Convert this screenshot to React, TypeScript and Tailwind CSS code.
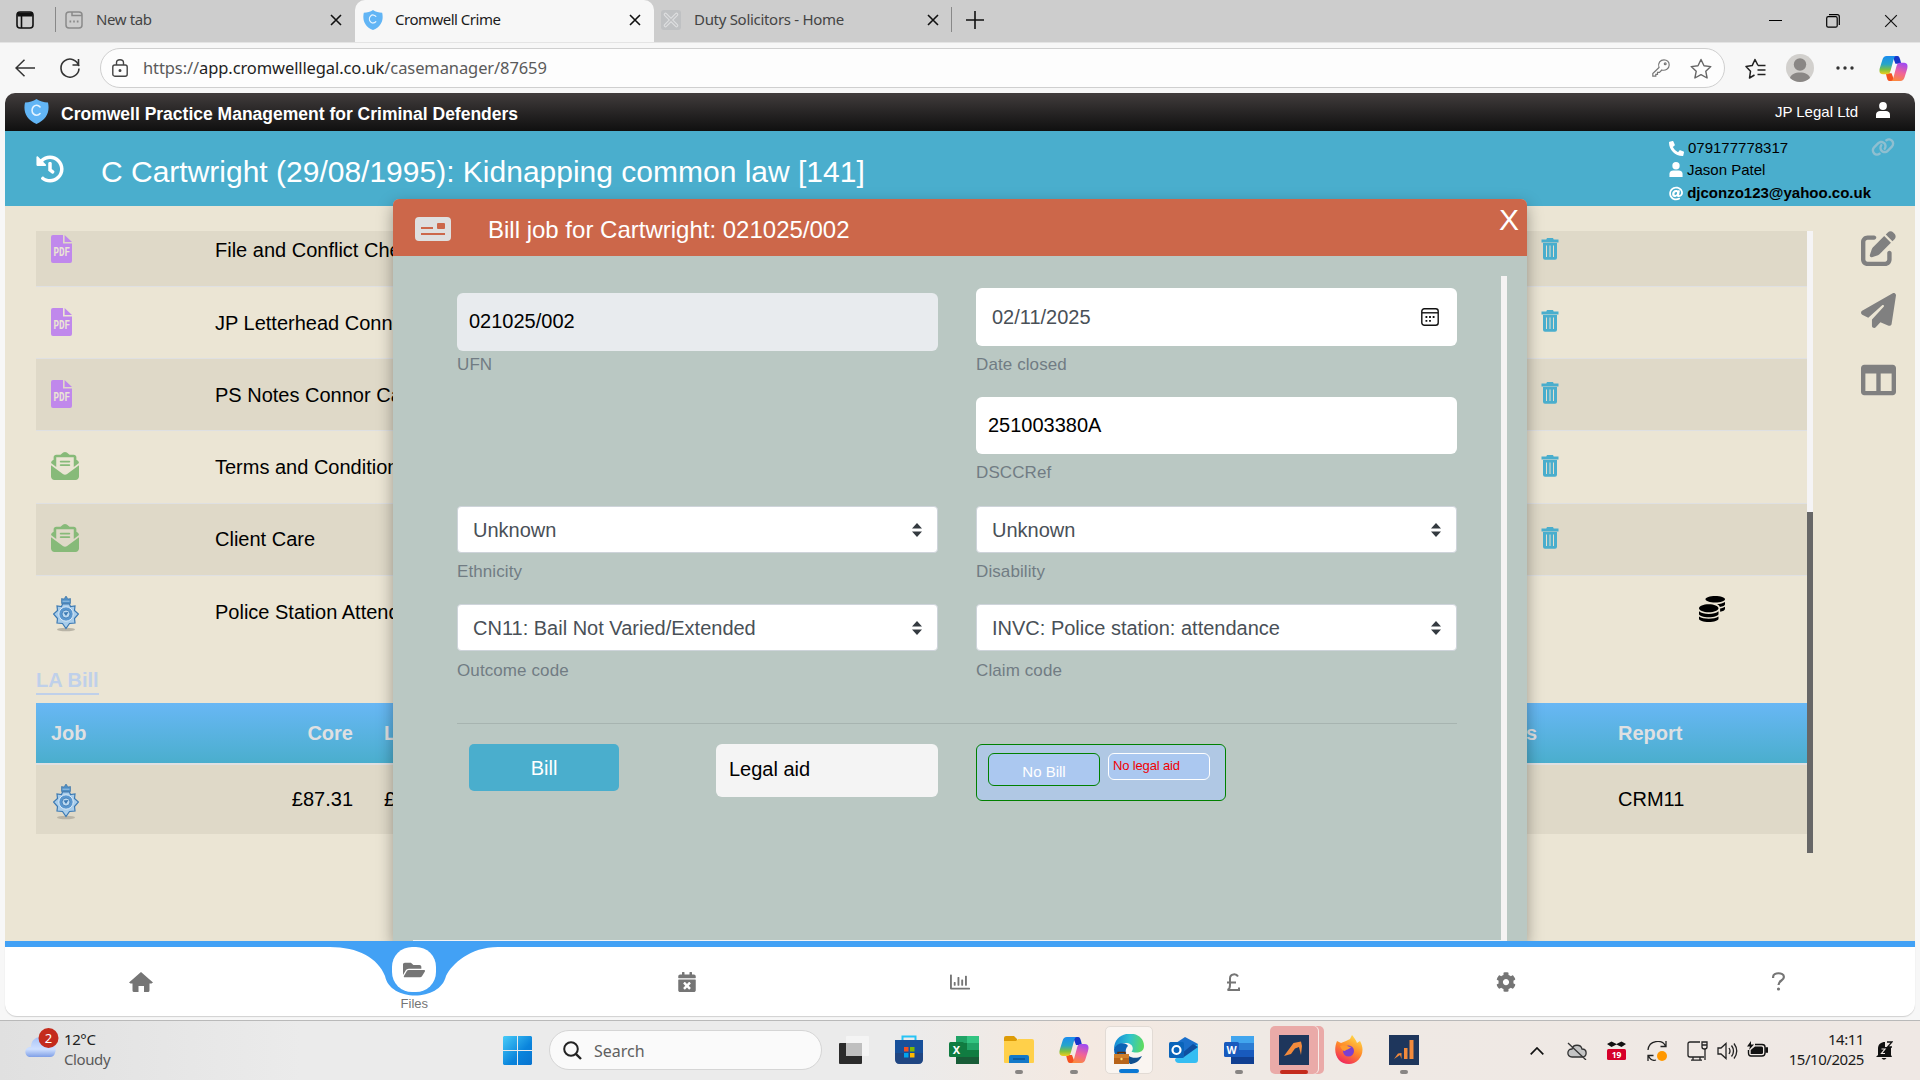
import React from "react";
import {
  FaHistory, FaCoins, FaColumns, FaFolderOpen, FaCalendarTimes,
  FaRegChartBar, FaCog, FaPhoneAlt, FaAt,
} from "react-icons/fa";
import { FaPenToSquare, FaPaperPlane, FaEnvelopeOpenText, FaLink } from "react-icons/fa6";

const ui = "font-['Noto_Sans','Open_Sans',sans-serif]";

function Shield({ className }: { className: string }) {
  return (
    <svg viewBox="0 0 24 24" preserveAspectRatio="none" className={className}>
      <path d="M12 0C9 2.2 5 3.2 1 3.4C-1 12 2 20 12 24C22 20 25 12 23 3.4C19 3.2 15 2.2 12 0Z" fill="#62b5f5" />
      <path d="M15.4 7.6A4.4 4.8 0 1 0 15.4 14" fill="none" stroke="#e6f4ff" strokeWidth="1.5" strokeLinecap="round" />
    </svg>
  );
}

function Person({ className }: { className: string }) {
  return (
    <svg viewBox="0 0 14 16" className={className} fill="white">
      <ellipse cx="7" cy="4" rx="3.9" ry="4" />
      <path d="M0 16V12.5C0 10.3 2 9 4 9H10C12 9 14 10.3 14 12.5V16Z" />
    </svg>
  );
}

function Copilot({ className, id }: { className: string; id: string }) {
  return (
    <svg viewBox="0 0 30 28" className={className}>
      <defs>
        <linearGradient id={id + "a"} x1="0" y1="0" x2="0" y2="1">
          <stop offset="0" stopColor="#1a8cf0" />
          <stop offset=".45" stopColor="#27a5c9" />
          <stop offset=".75" stopColor="#7fc03f" />
          <stop offset="1" stopColor="#f2ce1d" />
        </linearGradient>
        <linearGradient id={id + "b"} x1=".6" y1="0" x2=".3" y2="1">
          <stop offset="0" stopColor="#a24bf0" />
          <stop offset=".5" stopColor="#f0639a" />
          <stop offset="1" stopColor="#fb8a3c" />
        </linearGradient>
      </defs>
      <path d="M14 1H19C21 1 21.4 3 22 5L23 9H17Z" fill="#1736c9" />
      <path d="M16 27H11C9 27 8.600 25 8 23L7 19H13Z" fill="#f4511e" />
      <path d="M8 1H18C16 1 15.600 3 15 5L12 16C11.300 18.500 10.500 20 8 20H4C0 20 0 16 1 13L3.500 5C4.200 2.500 5.500 1 8 1Z" fill={`url(#${id}a)`} />
      <path d="M22 27H12C14 27 14.400 25 15 23L18 12C18.700 9.500 19.500 8 22 8H26C30 8 30 12 29 15L26.500 23C25.800 25.500 24.500 27 22 27Z" fill={`url(#${id}b)`} />
    </svg>
  );
}

function Cross({ className, width = 1.6 }: { className: string; width?: number }) {
  return (
    <svg viewBox="0 0 12 12" className={className} stroke="#111" strokeWidth={width}>
      <path d="M1 1L11 11M11 1L1 11" />
    </svg>
  );
}

function TabStrip() {
  return (
    <div className={`flex h-[42px] items-center bg-[#cdcdcd] ${ui} text-[15px] text-[#444]`}>
      <div className="flex h-full w-[355px] items-center rounded-br-[10px] pb-[3px] pl-4">
        <svg viewBox="0 0 18 18" className="h-[18px] w-[18px]" fill="none" stroke="#111" strokeWidth="1.6">
          <rect x="1" y="1" width="16" height="16" rx="3" />
          <path d="M1.500 3.500H16.500" strokeWidth="4" />
          <path d="M5.500 3V17" />
        </svg>
        <div className="ml-[21px] h-[25px] w-px bg-[#888]" />
        <svg viewBox="0 0 18 18" className="ml-[9px] h-[18px] w-[18px]" fill="none" stroke="#8a8a8a" strokeWidth="1.5">
          <rect x="1" y="1" width="16" height="16" rx="3" />
          <path d="M7 1V4.500H17" />
          <path d="M4.500 10.500H6.200M8.200 10.500H9.800M11.800 10.500H13.500" strokeWidth="1.8" />
        </svg>
        <span className="ml-[13px] w-[234px] tracking-[-0.4px]">New tab</span>
        <Cross className="h-[12px] w-[12px]" />
      </div>
      <div className="flex h-full w-[299px] items-center rounded-t-[10px] bg-[#f7f7f7] pb-[3px] pl-2">
        <Shield className="h-5 w-5" />
        <span className="ml-3 w-[234px] text-[#1b1b1b] tracking-[-0.5px]">Cromwell Crime</span>
        <Cross className="h-[12px] w-[12px]" />
      </div>
      <div className="flex h-full flex-1 items-center rounded-bl-[10px] pb-[3px] pl-[7px]">
        <svg viewBox="0 0 20 20" className="h-5 w-5">
          <rect width="20" height="20" rx="3" fill="#bfc1c3" />
          <path d="M4.500 4.500L15.500 15.500M15.500 4.500L4.500 15.500" stroke="#dedfe0" strokeWidth="3.600" strokeLinecap="round" />
          <path d="M4.500 4.500L15.500 15.500M15.500 4.500L4.500 15.500" stroke="#bfc1c3" strokeWidth="1.400" strokeLinecap="round" />
        </svg>
        <span className="ml-[13px] w-[233px] tracking-[-0.3px]">Duty Solicitors - Home</span>
        <Cross className="h-[12px] w-[12px]" />
        <div className="ml-3 h-[25px] w-px bg-[#888]" />
        <svg viewBox="0 0 18 18" className="ml-3.5 h-[18px] w-[18px]" stroke="#111" strokeWidth="1.600">
          <path d="M9 0V18M0 9H18" />
        </svg>
        <div className="ml-auto mr-[22px] flex items-center gap-[44px] pt-0.5">
          <div className="h-px w-[13px] bg-black" />
          <svg viewBox="0 0 14 14" className="h-[14px] w-[14px]" fill="none" stroke="#000" strokeWidth="1.2">
            <rect x=".7" y="2.700" width="10.500" height="10.500" rx="1.500" />
            <path d="M3 .7H11.300C12.600 .7 13.300 1.400 13.300 2.700V11" />
          </svg>
          <Cross className="h-[14px] w-[14px]" width={1} />
        </div>
      </div>
    </div>
  );
}

function AddressBar() {
  return (
    <div className={`flex h-[51px] items-center border-t border-[#e4e4e4] bg-[#f7f7f7] pl-[15px] ${ui}`}>
      <svg viewBox="0 0 20 18" className="h-[18px] w-5" fill="none" stroke="#333" strokeWidth="1.500">
        <path d="M20 9H1M9.500 .7L1 9L9.500 17.300" />
      </svg>
      <svg viewBox="0 0 20 20" className="ml-[25px] h-5 w-5" fill="none" stroke="#333" strokeWidth="1.600">
        <path d="M18.800 8.200A9 9 0 1 0 19 10.500" />
        <path d="M18.500 1V7H12.500" />
      </svg>
      <div className="ml-5 flex h-10 w-[1625px] items-center rounded-full border border-[#cfcfcf] bg-[#fdfdfd] pl-[11px] pr-3">
        <svg viewBox="0 0 16 18" className="h-[18px] w-4" fill="none" stroke="#444" strokeWidth="1.400">
          <rect x=".8" y="6" width="14.400" height="11.200" rx="2" />
          <path d="M4.500 6V3.800C4.500 -.2 11.500 -.2 11.500 3.800V6" />
          <circle cx="8" cy="11.500" r=".8" fill="#444" />
        </svg>
        <span className="ml-[15px] text-[16.500px] tracking-[-0.1px] text-[#5a5a5a]">
          https://<span className="text-[#1f1f1f]">app.cromwelllegal.co.uk</span>/casemanager/87659
        </span>
        <svg viewBox="0 0 18 18" className="ml-auto h-[18px] w-[18px]" fill="none" stroke="#777" strokeWidth="1.200">
          <path d="M7 8.500C5.500 4 8.500 .8 12 .8C15 .8 17.200 3 17.200 6C17.200 9.500 13.500 12 9.800 11L7.500 13.300H5.500V15.300H3.800V17.200H.8V14.500Z" />
          <circle cx="13.200" cy="4.800" r=".9" />
        </svg>
        <svg viewBox="0 0 22 21" className="ml-5 h-[21px] w-[22px]" fill="none" stroke="#666" strokeWidth="1.400" strokeLinejoin="round">
          <path d="M11 1.500L14 7.800L20.800 8.600L15.800 13.300L17.100 20L11 16.700L4.900 20L6.200 13.300L1.200 8.600L8 7.800Z" />
        </svg>
      </div>
      <svg viewBox="0 0 21 21" className="ml-[20px] h-[21px] w-[21px]" fill="none" stroke="#222" strokeWidth="1.500" strokeLinejoin="round">
        <path d="M13 7.500L10 1.500L7.200 7.600L1 8.600L5.500 13.300L4.500 20L9.500 17M13 7.500H20.500M12.500 12H20.500M12.500 16.500H20.500" />
      </svg>
      <svg viewBox="0 0 28 28" className="ml-5 h-7 w-7">
        <circle cx="14" cy="14" r="14" fill="#d2d0cd" />
        <circle cx="14" cy="10.500" r="6.200" fill="#8a8785" />
        <path d="M4 24C5 16.500 23 16.500 24 24C18 29.300 10 29.300 4 24Z" fill="#8a8785" />
      </svg>
      <svg viewBox="0 0 18 4" className="ml-[22px] h-1 w-[18px]" fill="#333">
        <circle cx="2" cy="2" r="1.700" /><circle cx="9" cy="2" r="1.700" /><circle cx="16" cy="2" r="1.700" />
      </svg>
      <Copilot className="ml-[25px] h-[27px] w-[29px]" id="top" />
    </div>
  );
}

function PdfIcon() {
  return (
    <svg viewBox="0 0 21 28" className="h-[28px] w-[21px]">
      <path d="M2 0H12V8.500H21V26Q21 28 19 28H2Q0 28 0 26V2Q0 0 2 0Z" fill="#c088ec" />
      <path d="M13.600 0L21 7H13.600Z" fill="#c088ec" />
      <text x="2.500" y="21.300" textLength="16.500" lengthAdjust="spacingAndGlyphs" fontSize="12.500" fontWeight="700" fontFamily="Liberation Mono, monospace" fill="#ebe5d4">PDF</text>
    </svg>
  );
}

function PoliceBadge() {
  return (
    <svg viewBox="0 0 26 36" className="h-9 w-[26px]">
      <ellipse cx="13" cy="33.500" rx="9" ry="1.800" fill="#b9b4a6" />
      <path d="M8.500 2.500L11 3L13 0L15 3L17.500 2.500V7.500H8.500Z" fill="#4f8ec4" stroke="#376ea3" strokeWidth=".6" />
      <path d="M9.500 5.200H16.500" stroke="#a9cdea" strokeWidth=".9" />
      <path d="M9.500 8H16.500L17.500 10.500L22 10L21.500 14.500L25.500 18L21.500 22.500L22 27L16.500 27.500L13 32.500L9.500 27.500L4 27L4.500 22.500L.5 18L4.500 14.500L4 10L8.500 10.500Z" fill="#a9cdea" stroke="#3b79b3" strokeWidth="1.200" />
      <circle cx="13" cy="18" r="7.200" fill="#5a97cf" stroke="#dcebf8" strokeWidth="1" />
      <circle cx="13" cy="18" r="4" fill="#bcd9f0" stroke="#3b79b3" strokeWidth=".8" />
      <path d="M10.500 16.500L13 20L15.500 16Z" fill="#3b79b3" />
    </svg>
  );
}

type DocRow = { name: string; kind: "pdf" | "mail" | "police" };
const docs: DocRow[] = [
  { name: "File and Conflict Check", kind: "pdf" },
  { name: "JP Letterhead Connor", kind: "pdf" },
  { name: "PS Notes Connor Cartwright", kind: "pdf" },
  { name: "Terms and Conditions", kind: "mail" },
  { name: "Client Care", kind: "mail" },
  { name: "Police Station Attendance", kind: "police" },
];

function DocumentRow({ doc, index }: { doc: DocRow; index: number }) {
  const shade = index % 2 === 0 && doc.kind !== "police" ? "bg-[#dfd9c8] " : "";
  const line = doc.kind === "police" ? "" : "border-b border-[#dfe0e2] ";
  return (
    <div className={"flex h-[72.200px] shrink-0 items-center pb-0.5 " + shade + line}>
      <div className={doc.kind === "police" ? "w-[179px] pl-[17px] pt-1.5" : "w-[179px] pl-[15px]"}>
        {doc.kind === "pdf" && <PdfIcon />}
        {doc.kind === "mail" && <FaEnvelopeOpenText className="h-7 w-7 text-[#87ba79]" />}
        {doc.kind === "police" && <PoliceBadge />}
      </div>
      <span className="w-[1326px] pt-0.5 text-xl text-black">{doc.name}</span>
      {doc.kind !== "police" && (
        <svg viewBox="0 0 18 22" className="mb-px h-[22px] w-[18px]" fill="#4aaecd">
          <path d="M6 0H12L12.700 1.500H17.500V4.500H.5V1.500H5.300Z" />
          <path d="M2 5H16V19.700Q16 21.700 14 21.700H4Q2 21.700 2 19.700Z" />
          <path d="M5.500 7.500V19M9 7.500V19M12.500 7.500V19" stroke="#e5dfce" strokeWidth="1" />
        </svg>
      )}
      {doc.kind === "police" && <FaCoins className="mb-[3px] ml-[158px] h-[26px] w-[26px] text-black" />}
    </div>
  );
}

function CasePage() {
  return (
    <div className="flex h-[735px] bg-[#ebe5d4] pl-[31px] pt-[25px]">
      <div className="w-[1771px]">
        <div className="flex h-[417px] flex-col justify-end overflow-hidden">
          {docs.map((d, i) => (
            <DocumentRow key={d.name} doc={d} index={i} />
          ))}
        </div>
        <div className="flex h-[55px] items-start pt-5">
          <span className="border-b-2 border-[#bfd0ea] text-xl leading-[25px] font-bold text-[#bfd0ea]">LA Bill</span>
        </div>
        <div className="flex h-[60px] items-center bg-gradient-to-b from-[#68b7f5] to-[#4aaecd] text-xl font-bold text-[#dfe0e2]">
          <span className="w-[237px] pl-[15px]">Job</span>
          <span className="w-20 text-right">Core</span>
          <span className="w-[1173px] pl-[31px]">Level</span>
          <span className="w-[92px]">s</span>
          <span>Report</span>
        </div>
        <div className="flex h-[71px] items-center border-t-2 border-[#dfe0e2] bg-[#dfd9c8] pb-0.5 text-xl">
          <div className="w-[237px] pl-[17px] pt-1.5"><PoliceBadge /></div>
          <span className="w-20 text-right">£87.31</span>
          <span className="w-[1265px] pl-[31px]">£0.00</span>
          <span>CRM11</span>
        </div>
      </div>
      <div className="flex h-[622px] w-1.5 flex-col bg-[#f5f4f5]">
        <div className="mt-auto h-[341px] bg-[#676767]" />
      </div>
      <div className="flex flex-col items-center pl-12">
        <FaPenToSquare className="h-[35px] w-[35px] text-[#808080]" />
        <FaPaperPlane className="mt-[27px] h-[35px] w-[35px] text-[#808080]" />
        <FaColumns className="mt-[34px] h-9 w-[35px] text-[#808080]" />
      </div>
    </div>
  );
}

function Label({ children }: { children: React.ReactNode }) {
  return <div className="pt-px text-[17px] leading-5 tracking-[0.1px] text-[#717c83]">{children}</div>;
}

function SelectBox({ value }: { value: string }) {
  return (
    <div className="flex h-[47px] items-center justify-between rounded-[4px] border border-[#ced4da] bg-white pl-[15px] pr-[15px] text-xl text-[#495057]">
      <span>{value}</span>
      <svg viewBox="0 0 10 14" className="h-[14px] w-[10px]" fill="#343a40">
        <path d="M5 0L10 5.500H0ZM5 14L0 8.500H10Z" />
      </svg>
    </div>
  );
}

function BillDialog() {
  return (
    <div className="absolute left-[388px] top-[106px] flex h-[742px] w-[1134px] flex-col rounded-t-md bg-[#bac8c3] shadow-[0_6px_16px_rgba(0,0,0,0.35)]">
      <div className="flex h-[57px] items-start rounded-t-md bg-[#cc674a] pl-[22px] pr-2 text-white">
        <svg viewBox="0 0 36 24" className="mt-[18px] h-6 w-9">
          <rect width="36" height="24" rx="4" fill="#dfdfdf" />
          <path d="M6 11H18M6 17H30" stroke="#cc674a" strokeWidth="2" />
          <rect x="22" y="6" width="8" height="6" rx="1" fill="#cc674a" />
        </svg>
        <span className="ml-[37px] mt-[13px] text-2xl leading-9">Bill job for Cartwright: 021025/002</span>
        <span className="ml-auto text-[30px] leading-[42px]">X</span>
      </div>
      <div className="flex flex-1 pl-5">
        <div className="flex w-[1088px] flex-col border-b border-[#f3f3f3] pl-11 pr-11">
          <div className="grid grid-cols-[481px_481px] gap-x-[38px]">
            <div className="h-[141px] pt-[37px]">
              <div className="flex h-[58px] items-center rounded-md bg-[#e8ebee] pb-0.5 pl-3 text-xl text-black">021025/002</div>
              <div className="pt-[3px]"><Label>UFN</Label></div>
            </div>
            <div className="h-[141px] pt-8">
              <div className="flex h-[58px] items-center justify-between rounded-md bg-white pl-4 pr-[18px] text-xl text-[#495057]">
                <span>02/11/2025</span>
                <svg viewBox="0 0 18 18" className="h-[18px] w-[18px]" fill="none" stroke="#111" strokeWidth="1.400">
                  <rect x=".8" y=".8" width="16.400" height="16.400" rx="2.500" />
                  <path d="M1 4.800H17" />
                  <path d="M4.500 9H6.300M8.100 9H9.900M11.700 9H13.500M4.500 12.800H6.300M8.100 12.800H9.900" strokeWidth="1.800" />
                </svg>
              </div>
              <div className="pt-2"><Label>Date closed</Label></div>
            </div>
            <div />
            <div className="h-[109px]">
              <div className="flex h-[57px] items-center rounded-md bg-white pb-0.5 pl-3 text-xl text-black">251003380A</div>
              <div className="pt-2"><Label>DSCCRef</Label></div>
            </div>
            <div className="h-[98px]"><SelectBox value="Unknown" /><div className="pt-2"><Label>Ethnicity</Label></div></div>
            <div className="h-[98px]"><SelectBox value="Unknown" /><div className="pt-2"><Label>Disability</Label></div></div>
            <div className="h-[119px]"><SelectBox value="CN11: Bail Not Varied/Extended" /><div className="pt-[9px]"><Label>Outcome code</Label></div></div>
            <div className="h-[119px]"><SelectBox value="INVC: Police station: attendance" /><div className="pt-[9px]"><Label>Claim code</Label></div></div>
          </div>
          <div className="h-px w-[1000px] bg-[#a7b4b0]" />
          <div className="flex items-start pl-3 pt-5">
            <button className="h-[47px] w-[150px] rounded-[5px] bg-[#4aaecd] text-xl text-white">Bill</button>
            <div className="ml-[97px] flex h-[53px] w-[222px] items-center rounded-md bg-[#f4f4f4] pb-[3px] pl-[13px] text-xl text-black">Legal aid</div>
            <div className="ml-[38px] flex h-[57px] w-[250px] items-start rounded-md border border-[#008000] bg-[#b0c8e4] pl-[11px] pt-2">
              <button className="h-[33px] w-[112px] rounded-md border border-[#008000] bg-[#abc8f0] pt-[5px] text-[15px] text-white">No Bill</button>
              <div className="ml-2 h-[27px] w-[102px] rounded-md border border-white bg-[#abc8f0] pl-1 text-[13px] leading-[24px] tracking-[-0.15px] text-[#f00000]">No legal aid</div>
            </div>
          </div>
        </div>
        <div className="mt-5 w-1.5 bg-[#f5f3f3]" />
      </div>
    </div>
  );
}

function BottomNav() {
  const cell = "flex h-full items-center justify-center";
  return (
    <div className="relative h-[75px] overflow-hidden rounded-b-[12px] border-t-[6px] border-[#42a1f5] bg-white text-[#757575] shadow-[0_1px_1px_#d0d0d0]">
      <svg viewBox="0 0 168 50" className="absolute left-[325px] top-[-1px] h-[50px] w-[168px]">
        <path d="M0 0H168V1C140 1 122 18 116 30C110 56 60 56 55 30C48 12 28 1 0 1Z" fill="#42a1f5" />
        <rect x="62" y="1" width="44" height="45" rx="20" fill="white" />
      </svg>
      <div className="relative grid h-[69px] grid-cols-7">
        <div className={cell}>
          <svg viewBox="0 0 24 20" className="h-5 w-6" fill="#757575">
            <path d="M12 0L24 10.500L22.500 11.500H20.500V18.500Q20.500 20 19 20H15V14H9.500V20H5Q3.500 20 3.500 18.500V11.500H1.500L0 10.500Z" />
          </svg>
        </div>
        <div className="flex flex-col items-center pt-3">
          <FaFolderOpen className="h-[22px] w-[22px]" />
          <span className="mt-[15px] text-[13px] leading-4">Files</span>
        </div>
        <div className={cell}><FaCalendarTimes className="h-5 w-5" /></div>
        <div className={cell}><FaRegChartBar className="h-5 w-5" /></div>
        <div className={cell}>
          <svg viewBox="0 0 14 18" className="h-[18px] w-3.5" fill="none" stroke="#757575" strokeWidth="2">
            <path d="M12 3.500C10.500 .5 4 .2 4 5.500V12C4 15 3 16.500 1.500 17H13V14.500M1 9.500H10" />
          </svg>
        </div>
        <div className={cell}><FaCog className="h-5 w-5" /></div>
        <div className={cell}>
          <svg viewBox="0 0 13 19" className="h-[19px] w-[13px]" fill="none" stroke="#757575" strokeWidth="2.200">
            <path d="M1.100 6V5C1.100 0 11.900 0 11.900 5C11.900 9 6.500 8 6.500 13" />
            <circle cx="6.500" cy="17" r="1.600" fill="#757575" stroke="none" />
          </svg>
        </div>
      </div>
    </div>
  );
}

function AppWindow() {
  return (
    <div className="relative mx-[5px] h-[923px] rounded-b-[12px] font-['Liberation_Sans',Arial,sans-serif]">
      <div className="flex h-[38px] items-center rounded-t-[10px] bg-gradient-to-b from-[#423d3d] to-[#101010] pl-[19px] pr-[25px] text-white">
        <Shield className="mb-0.5 h-[25px] w-[25px]" />
        <span className="ml-3 pt-1 text-[17.500px] font-bold">Cromwell Practice Management for Criminal Defenders</span>
        <span className="ml-auto text-[15px]">JP Legal Ltd</span>
        <Person className="mb-1 ml-[18px] h-4 w-[14px]" />
      </div>
      <div className="flex h-[75px] bg-[#4aaecd] text-white">
        <FaHistory className="ml-[31px] mt-6 h-7 w-7" />
        <h1 className="ml-[37px] mt-[23px] text-[30px] leading-9">C Cartwright (29/08/1995): Kidnapping common law [141]</h1>
        <div className="ml-auto flex w-[202px] flex-col pt-1.5 text-[15px] text-black">
          <div className="flex h-[22px] items-center gap-1"><FaPhoneAlt className="h-[15px] w-[15px] text-white" />079177778317</div>
          <div className="flex h-[23px] items-center gap-1"><Person className="mb-0.5 h-[15px] w-[14px]" />Jason Patel</div>
          <div className="flex h-[23px] items-center gap-1 font-bold"><FaAt className="h-[15px] w-[15px] text-white" />djconzo123@yahoo.co.uk</div>
        </div>
        <FaLink className="mr-5 mt-1 h-6 w-6 text-[#8fbfd0]" />
      </div>
      <CasePage />
      <BillDialog />
      <BottomNav />
    </div>
  );
}

function Slot({ children, mark }: { children: React.ReactNode; mark?: "grey" | "blue" | "red" }) {
  return (
    <div
      className={
        "flex h-12 w-12 flex-col items-center justify-end rounded-[5px] " +
        (mark === "blue"
          ? "border border-[#e2dbd5] bg-[#faf5f1]"
          : mark === "red"
            ? "bg-[#eaaaa8] shadow-[1px_0_0_#f8ece8,6px_0_0_#eaaaa8]"
            : "")
      }
    >
      <div className="flex h-[30px] items-center justify-center">{children}</div>
      <div
        className={
          "mt-[5px] h-1 rounded-full " +
          (mark === "grey" ? "w-2 bg-[#888583]" : mark === "blue" ? "w-5 bg-[#0a78d4]" : mark === "red" ? "w-7 bg-[#c42b1c]" : "w-2")
        }
      />
    </div>
  );
}

function Taskbar() {
  return (
    <div className={`flex h-[60px] border-t border-[#b9b9b9] ${ui}`}>
      <div className="flex h-full w-full bg-[linear-gradient(90deg,#e0e0e0_0px,#ebebeb_300px,#ebebeb_900px,#f4e9e1_1090px,#efe9e4_1250px,#efe8e4_1920px)]">
        <div className="flex w-[503px] pl-[25px] pt-[7px]">
          <svg viewBox="0 0 34 32" className="h-8 w-[34px]">
            <defs>
              <linearGradient id="cloud" x1="0" y1="0" x2="0" y2="1">
                <stop offset="0" stopColor="#a9c4f7" /><stop offset=".6" stopColor="#cfe0ff" /><stop offset="1" stopColor="#7f9fe6" />
              </linearGradient>
            </defs>
            <path d="M6 29C-2 29-1 18 6 19C6 8 19 6 22 15C30 14 32 20 30 25Q29 29 25 29Z" fill="url(#cloud)" />
            <circle cx="23.500" cy="10" r="10" fill="#c42b1c" />
            <text x="23.500" y="14.500" textAnchor="middle" fontSize="13" fill="white" fontFamily="Noto Sans, sans-serif">2</text>
          </svg>
          <div className="ml-[5px] text-[15px] leading-5 tracking-[-0.4px] text-[#222]">
            <div className="pt-px">12°C</div>
            <div className="text-[#5a5a5a]">Cloudy</div>
          </div>
        </div>
        <svg viewBox="0 0 29 29" className="mt-[15px] h-[29px] w-[29px]">
          <defs>
            <linearGradient id="win" x1="0" y1="0" x2="1" y2="1">
              <stop offset="0" stopColor="#48ccf8" /><stop offset=".6" stopColor="#0a84dc" /><stop offset="1" stopColor="#0873cf" />
            </linearGradient>
          </defs>
          <path d="M1 0H14V14H0V1ZM15 0H28L29 1V14H15ZM0 15H14V29H1L0 28ZM15 15H29V28L28 29H15Z" fill="url(#win)" />
        </svg>
        <div className="ml-[17px] mt-[9px] flex h-10 w-[273px] items-center rounded-full border border-[#d5d5d5] bg-[#fafafa] pl-[13px]">
          <svg viewBox="0 0 19 19" className="h-[19px] w-[19px]" fill="none" stroke="#222" strokeWidth="2">
            <circle cx="8" cy="8" r="6.800" /><path d="M12.800 12.800L18 18" strokeWidth="2.400" />
          </svg>
          <span className="ml-3 pt-px text-base text-[#606060]">Search</span>
        </div>
        <div className="ml-2 mt-[5px] flex gap-[7px]">
          <Slot>
            <svg viewBox="0 0 30 30" className="h-[30px] w-[30px]">
              <rect x="0" y="8" width="23" height="21" rx="1" fill="#2b2b2b" />
              <rect x="7" y="1" width="23" height="20" rx="1" fill="#f4f4f4" />
              <path d="M7 8H23V21H7Z" fill="#bfbfbf" />
            </svg>
          </Slot>
          <Slot>
            <svg viewBox="0 0 30 30" className="h-[30px] w-[30px]">
              <path d="M8.500 6V1.500H21.500V6" fill="none" stroke="#27c4f5" strokeWidth="2" />
              <path d="M1 5H29V24Q29 29 24 29H6Q1 29 1 24Z" fill="#17509a" />
              <path d="M1 18L29 18V24Q29 29 24 29H6Q1 29 1 24Z" fill="#263f73" opacity=".6" />
              <path d="M10 12H14.500V16.500H10Z" fill="#f25022" /><path d="M16 12H20.500V16.500H16Z" fill="#7fba00" />
              <path d="M10 18H14.500V22.500H10Z" fill="#00a4ef" /><path d="M16 18H20.500V22.500H16Z" fill="#ffb900" />
            </svg>
          </Slot>
          <Slot>
            <svg viewBox="0 0 30 30" className="h-[30px] w-[30px]">
              <path d="M7 1H18V8H7Z" fill="#21a366" /><path d="M18 1H30V8H18Z" fill="#33c481" />
              <path d="M7 8H18V15H7Z" fill="#107c41" /><path d="M18 8H30V15H18Z" fill="#21a366" />
              <path d="M7 15H30V22H7Z" fill="#107c41" /><path d="M7 22H30V29H7Z" fill="#185c37" />
              <rect x="0" y="7" width="15" height="15" rx="1.500" fill="#107c41" />
              <text x="7.500" y="18.500" textAnchor="middle" fontSize="11" fontWeight="700" fill="white" fontFamily="Noto Sans, sans-serif">X</text>
            </svg>
          </Slot>
          <Slot mark="grey">
            <svg viewBox="0 0 30 28" className="h-7 w-[30px]">
              <path d="M0 2Q0 0 2 0H10L13 3V8H0Z" fill="#dd9b06" />
              <path d="M0 5H12L14 3H28Q30 3 30 5V26Q30 27 29 27H1Q0 27 0 26Z" fill="#ffd04a" />
              <path d="M5 27V21Q5 19 7 19H23Q25 19 25 21V27Z" fill="#1479c9" />
              <path d="M9 23H21" stroke="#0b4a86" strokeWidth="1.200" />
            </svg>
          </Slot>
          <Slot mark="grey"><Copilot className="h-[28px] w-[30px]" id="task" /></Slot>
          <Slot mark="blue">
            <svg viewBox="0 0 30 30" className="h-[30px] w-[30px]">
              <defs>
                <linearGradient id="edge" x1="0" y1=".4" x2="1" y2=".5">
                  <stop offset="0" stopColor="#1487d8" /><stop offset=".5" stopColor="#2fc2cf" /><stop offset="1" stopColor="#5fdc5c" />
                </linearGradient>
              </defs>
              <path d="M0 15C0 -5 30 -5 30 12C30 20 20 19 17.500 17.500C20 15 19 10 13 9C6 8.500 1 13 0 15Z" fill="url(#edge)" />
              <path d="M0 15C3 8 12 8 14 12C10 15 11 25 18 29C8 31 0 25 0 15Z" fill="#0c63b5" />
              <path d="M12 17C13 23 20 26 28 22C25 28 20 30 16 30Z" fill="#12508f" />
              <path d="M0 20H15V30H0Z" fill="#b8641a" /><path d="M0 20H15V24H0Z" fill="#cf7f2b" />
              <path d="M4 20V18.500H11V20" fill="none" stroke="#5c2d09" strokeWidth="1.500" />
              <circle cx="7.500" cy="25" r="1.200" fill="#ffe071" />
            </svg>
          </Slot>
          <Slot>
            <svg viewBox="0 0 30 30" className="h-[30px] w-[30px]">
              <path d="M4 10L16 2L29 9V17L16 24L4 18Z" fill="#1b6fca" />
              <path d="M15 18L29 9V25Q29 28 26 28H10Q6 28 6 24Z" fill="#35bdf2" />
              <path d="M12 19L24 9L29 12L15 22Z" fill="#0f4fa0" />
              <rect x="0" y="7" width="15" height="16" rx="1.500" fill="#0a64ba" />
              <circle cx="7.500" cy="15" r="4" fill="none" stroke="white" strokeWidth="2.200" />
            </svg>
          </Slot>
          <Slot mark="grey">
            <svg viewBox="0 0 30 30" className="h-[30px] w-[30px]">
              <path d="M7 1H30V8H7Z" fill="#41a5ee" /><path d="M7 8H30V15H7Z" fill="#2b7cd3" />
              <path d="M7 15H30V22H7Z" fill="#185abd" /><path d="M7 22H30V29H7Z" fill="#103f91" />
              <rect x="0" y="7" width="15" height="15" rx="1.500" fill="#185abd" />
              <text x="7.500" y="18.500" textAnchor="middle" fontSize="10.500" fontWeight="700" fill="white" fontFamily="Noto Sans, sans-serif">W</text>
            </svg>
          </Slot>
          <Slot mark="red">
            <svg viewBox="0 0 30 30" className="h-[30px] w-[30px]">
              <rect width="30" height="30" fill="#1e365c" />
              <path d="M5 21L14.500 8L22 6.500L23 11L22 20L20 12L16 13.500L12 19Z" fill="#f28a3c" />
            </svg>
          </Slot>
          <Slot>
            <svg viewBox="0 0 30 30" className="h-[30px] w-[30px]">
              <defs>
                <linearGradient id="fox" x1=".8" y1="0" x2=".3" y2="1">
                  <stop offset="0" stopColor="#ffe14a" /><stop offset=".5" stopColor="#ff8a2a" /><stop offset="1" stopColor="#f0255e" />
                </linearGradient>
              </defs>
              <path d="M3 6L7 8L12 6L16 4L18 0C21 4 22 5 23 8L26 6C33 18 24 29 15 29C4 29-2 18 3 6Z" fill="url(#fox)" />
              <circle cx="14.500" cy="16" r="5.500" fill="#7b3fd0" />
              <path d="M6 11C10 9 14 12 17 12C15 15 12 14 11 16C9 16 7 14 6 11Z" fill="#ff9a2e" />
            </svg>
          </Slot>
          <Slot mark="grey">
            <svg viewBox="0 0 30 30" className="h-[30px] w-[30px]">
              <rect width="30" height="30" fill="#1e365c" />
              <path d="M15 13H18.500V24H15ZM20.500 5H24.500V24H20.500ZM5 24L9 18.500L12.500 18V24L11 20Z" fill="#f28a3c" />
            </svg>
          </Slot>
        </div>
        <div className="mr-[27px] ml-auto flex items-center text-[#1b1b1b]">
          <svg viewBox="0 0 14 8" className="h-2 w-3.5" fill="none" stroke="#111" strokeWidth="1.700"><path d="M.7 7.300L7 1L13.300 7.300" /></svg>
          <svg viewBox="0 0 20 18" className="ml-[23px] h-[18px] w-5" fill="#c4c4c4" stroke="#333" strokeWidth="1.300">
            <path d="M5 15C-.5 15-.5 7 5 7C6 2 14 2 15 7C20.500 7 20.500 15 15 15Z" /><path d="M1 1L19 18" />
          </svg>
          <svg viewBox="0 0 19 19" className="ml-5 h-[19px] w-[19px]">
            <path d="M0 3L4.500 .5L9.500 3L14.500 .5L19 3L14.500 6L9.500 3.500L4.500 6Z" fill="#111" />
            <rect y="8" width="19" height="11" rx="1.500" fill="#d6002a" />
            <text x="9.500" y="16.700" textAnchor="middle" fontSize="8.500" fontWeight="700" fill="white" fontFamily="Noto Sans, sans-serif">19</text>
          </svg>
          <svg viewBox="0 0 20 20" className="ml-[21px] h-5 w-5" fill="none" stroke="#222" strokeWidth="1.300">
            <path d="M1 9C2 -1 15 -2 18.500 5M19 0V5.500H13.500M1 20V14.500H6.500M1.500 15C3 18 6 20 9 19" />
            <circle cx="15" cy="15" r="5" fill="#ff9800" stroke="none" />
          </svg>
          <svg viewBox="0 0 21 20" className="ml-5 h-5 w-[21px]" fill="none" stroke="#222" strokeWidth="1.300">
            <path d="M13 1H3Q1 1 1 3V14Q1 16 3 16H17M6 16V19M13 16V19M4 19.200H15M18 8V19" /><path d="M15 1H20V6Q20 8 17.500 8Q15 8 15 6ZM15 4H20" />
          </svg>
          <svg viewBox="0 0 21 18" className="ml-[9px] h-[18px] w-[21px]" fill="none" stroke="#222" strokeWidth="1.300">
            <path d="M1 6H4L9 1.500V16.500L4 12H1ZM12 6Q14 9 12 12M14.500 3.500Q18.500 9 14.500 14.500M17 1.500Q22.500 9 17 16.500" />
          </svg>
          <svg viewBox="0 0 21 16" className="mb-1 ml-[9px] h-4 w-[21px]" fill="none" stroke="#111" strokeWidth="1.400">
            <path d="M8 3.500H15Q18 3.500 18 6V12Q18 15 15 15H4Q1.500 15 1.500 12V9" />
            <path d="M8 5.500H14.500Q16 5.500 16 7V11.500Q16 13 14.500 13H3.700V9Z" fill="#111" stroke="none" />
            <path d="M19 7H20.500V11H19Z" fill="#111" /><path d="M4 0L0 5.500H3L2 9L7 3.500H4Z" fill="#111" stroke="none" />
          </svg>
          <div className="w-[96px] pb-1 text-right text-[15px] leading-5 tracking-[-0.450px]">
            <div>14:11</div><div>15/10/2025</div>
          </div>
          <svg viewBox="0 0 17 19" className="ml-3 h-[19px] w-[17px]">
            <path d="M2 14V8C2 3 5 1 9 1V6H15V14L16 16H0ZM5.500 17H10.500Q8 20.500 5.500 17Z" fill="#111" />
            <path d="M5.500 8H9L5.500 12.500H9" stroke="#efe8e4" strokeWidth="1.200" fill="none" />
            <path d="M11 1H16L11.500 6H16" stroke="#111" strokeWidth="1.300" fill="none" />
          </svg>
        </div>
      </div>
    </div>
  );
}

export default function App() {
  return (
    <div className="flex h-[1080px] w-[1920px] flex-col overflow-hidden bg-[#f7f7f7]">
      <TabStrip />
      <AddressBar />
      <AppWindow />
      <div className="h-1 shrink-0" />
      <Taskbar />
    </div>
  );
}
